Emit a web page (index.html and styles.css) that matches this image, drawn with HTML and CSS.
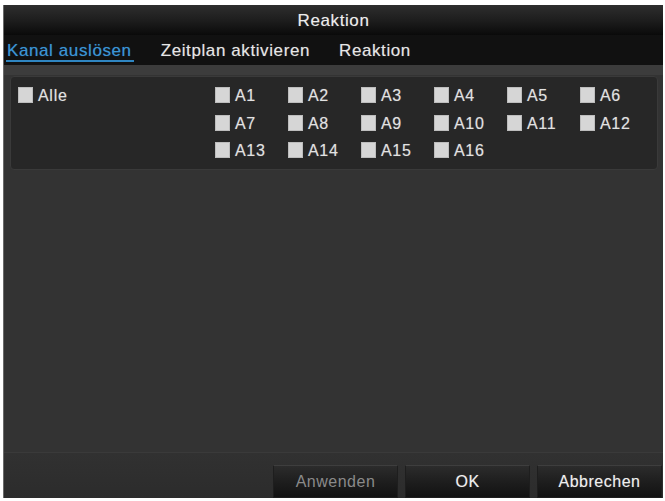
FILE: index.html
```html
<!DOCTYPE html>
<html lang="de">
<head>
<meta charset="utf-8">
<title>Reaktion</title>
<link rel="stylesheet" href="styles.css">
</head>
<body>
<div class="dialog">
  <div class="title">Reaktion</div>
  <div class="tabs">
    <span class="tab active">Kanal auslösen</span>
    <span class="tab">Zeitplan aktivieren</span>
    <span class="tab">Reaktion</span>
  </div>
  <div class="band"></div>
  <div class="content">
    <div class="panel">
      <div class="all">
        <label class="check"><span class="box"></span><span class="lbl">Alle</span></label>
      </div>
      <div class="grid">
        <label class="check"><span class="box"></span><span class="lbl">A1</span></label>
        <label class="check"><span class="box"></span><span class="lbl">A2</span></label>
        <label class="check"><span class="box"></span><span class="lbl">A3</span></label>
        <label class="check"><span class="box"></span><span class="lbl">A4</span></label>
        <label class="check"><span class="box"></span><span class="lbl">A5</span></label>
        <label class="check"><span class="box"></span><span class="lbl">A6</span></label>
        <label class="check"><span class="box"></span><span class="lbl">A7</span></label>
        <label class="check"><span class="box"></span><span class="lbl">A8</span></label>
        <label class="check"><span class="box"></span><span class="lbl">A9</span></label>
        <label class="check"><span class="box"></span><span class="lbl">A10</span></label>
        <label class="check"><span class="box"></span><span class="lbl">A11</span></label>
        <label class="check"><span class="box"></span><span class="lbl">A12</span></label>
        <label class="check"><span class="box"></span><span class="lbl">A13</span></label>
        <label class="check"><span class="box"></span><span class="lbl">A14</span></label>
        <label class="check"><span class="box"></span><span class="lbl">A15</span></label>
        <label class="check"><span class="box"></span><span class="lbl">A16</span></label>
      </div>
    </div>
  </div>
  <div class="footer">
    <button class="btn disabled">Anwenden</button>
    <button class="btn">OK</button>
    <button class="btn">Abbrechen</button>
  </div>
</div>
</body>
</html>
```
FILE: styles.css
```css
html, body {
  margin: 0;
  padding: 0;
  background: #ffffff;
}
body {
  width: 665px;
  height: 501px;
  overflow: hidden;
  font-family: "Liberation Sans", Arial, sans-serif;
}
.dialog {
  margin: 5px 2px 0 3px;
  width: 660px;
  height: 493px;
  box-sizing: border-box;
  border-left: 1px solid #6a6a6a;
  background: #333333;
  display: flex;
  flex-direction: column;
}
.title {
  height: 30px;
  flex: none;
  background: linear-gradient(#2e2e2e, #1c1c1c 55%, #0a0a0a);
  color: #ececec;
  font-size: 17px;
  letter-spacing: 0.6px;
  line-height: 31px;
  text-align: center;
  text-shadow: 0 0 1px rgba(255,255,255,0.35);
}
.tabs {
  height: 30px;
  flex: none;
  box-sizing: border-box;
  padding: 2px 0 0 2px;
  background: #111111;
  display: flex;
  align-items: center;
  gap: 26px;
  font-size: 17px;
  letter-spacing: 0.6px;
  color: #e6e6e6;
  text-shadow: 0 0 1px rgba(255,255,255,0.35);
}
.tab {
  line-height: 19px;
  border-bottom: 2px solid transparent;
  padding: 0 2px 0 1px;
}
.tab.active {
  color: #3a95d6;
  border-bottom-color: #2f86c2;
  text-shadow: 0 0 1px rgba(60,150,220,0.5);
}
.band {
  height: 10px;
  flex: none;
  background: #3c3c3c;
}
.content {
  flex: 1;
  padding: 1px 5px 0 6px;
}
.panel {
  height: 94px;
  box-sizing: border-box;
  border: 1px solid #3a3a3a;
  border-radius: 4px;
  background: #272727;
  padding: 10px 0 0 7px;
  display: flex;
}
.all {
  width: 197px;
  flex: none;
}
.grid {
  display: grid;
  grid-template-columns: repeat(6, 73px);
  grid-auto-rows: 27.5px;
}
.check {
  display: flex;
  align-items: flex-start;
  height: 16px;
}
.box {
  width: 15px;
  height: 16px;
  flex: none;
  box-sizing: border-box;
  background: #d6d6d6;
  border: 1px solid #bdbdbd;
}
.lbl {
  margin-left: 5px;
  font-size: 16px;
  line-height: 18px;
  letter-spacing: 0.7px;
  color: #e2e2e2;
  text-shadow: 0 0 1px rgba(255,255,255,0.35);
}
.footer {
  height: 46px;
  flex: none;
  box-sizing: border-box;
  border-top: 1px solid #3a3a3a;
  background: linear-gradient(#313131, #2c2c2c);
  display: flex;
  justify-content: flex-end;
  align-items: flex-end;
  gap: 7px;
  padding: 0 1px 0 0;
}
.btn {
  width: 125px;
  height: 33px;
  box-sizing: border-box;
  border: 1px solid #1e1e1e;
  border-top-color: #3e3e3e;
  background: linear-gradient(#2c2c2c, #1e1e1e 50%, #121212);
  color: #efefef;
  font-family: "Liberation Sans", Arial, sans-serif;
  font-size: 16px;
  letter-spacing: 0.5px;
  padding: 0;
  text-shadow: 0 0 1px rgba(255,255,255,0.35);
}
.btn.disabled {
  color: #8a8a8a;
  text-shadow: none;
}
```
